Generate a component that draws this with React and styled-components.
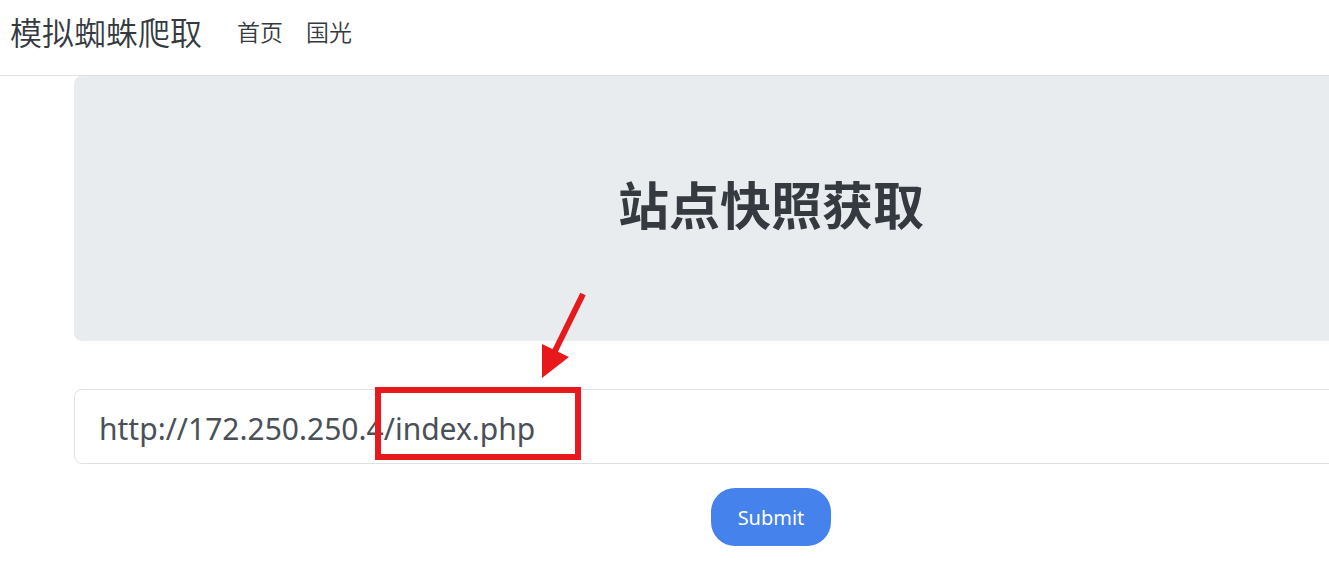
import React from "react";
import styled, { createGlobalStyle } from "styled-components";

const GlobalStyle = createGlobalStyle`
  *, *::before, *::after { box-sizing: border-box; }
  body {
    margin: 0;
    background: #fff;
    color: #343a40;
    font-family: "Noto Sans", "Noto Sans CJK SC", sans-serif;
  }
`;

const Page = styled.div`
  overflow: hidden;
  padding-bottom: 24px;
`;

const Header = styled.header`
  display: flex;
  align-items: flex-start;
  height: 76px;
  padding: 8px 10px;
  border-bottom: 1px solid #dee2e6;
`;

const Brand = styled.a`
  margin-right: 35px;
  color: #343a40;
  font-family: "Noto Sans CJK SC", sans-serif;
  font-size: 32px;
  font-weight: 350;
  line-height: 46px;
  text-decoration: none;
`;

const Nav = styled.nav`
  display: flex;
  gap: 23px;
`;

const NavLink = styled.a`
  color: #343a40;
  font-family: "Noto Sans CJK SC", sans-serif;
  font-size: 23px;
  font-weight: 350;
  line-height: 46px;
  text-decoration: none;
`;

const Main = styled.main`
  margin-left: 74px;
  margin-right: -139px;
`;

const Hero = styled.section`
  display: flex;
  justify-content: center;
  padding: 91px 0 102px;
  border-radius: 8px;
  background: #e9ecef;
`;

const Title = styled.h1`
  margin: 0;
  font-family: "Noto Sans CJK SC", sans-serif;
  font-size: 51px;
  font-weight: 700;
  line-height: 72px;
`;

const Form = styled.form`
  display: flex;
  flex-direction: column;
  align-items: center;
  gap: 24px;
  margin-top: 48px;
`;

const Field = styled.div`
  position: relative;
  width: 100%;
`;

const UrlInput = styled.input`
  display: block;
  width: 100%;
  height: 75px;
  padding: 4px 24px 0;
  border: 1px solid #dee2e6;
  border-radius: 8px;
  color: #495057;
  background: #fff;
  font-family: "Noto Sans", sans-serif;
  font-size: 30px;
  outline: none;
`;

const Submit = styled.button`
  width: 120px;
  height: 58px;
  border: 0;
  border-radius: 24px;
  color: #fff;
  background: #4582ec;
  font-family: "Noto Sans", sans-serif;
  font-size: 20px;
`;

const Annotation = styled.svg`
  position: absolute;
  left: 300px;
  bottom: 3px;
  pointer-events: none;
`;

export default function App() {
  return (
    <Page>
      <GlobalStyle />
      <Header>
        <Brand href="#">模拟蜘蛛爬取</Brand>
        <Nav>
          <NavLink href="#">首页</NavLink>
          <NavLink href="#">国光</NavLink>
        </Nav>
      </Header>
      <Main>
        <Hero>
          <Title>站点快照获取</Title>
        </Hero>
        <Form onSubmit={(e) => e.preventDefault()}>
          <Field>
            <UrlInput aria-label="URL" type="text" defaultValue="http://172.250.250.4/index.php" />
            <Annotation width="220" height="170" viewBox="0 0 220 170" aria-hidden="true">
              <rect x="4" y="99" width="200" height="67" fill="none" stroke="#e8191c" strokeWidth="6" />
              <path d="M209 3 L179 64" stroke="#e8191c" strokeWidth="6" />
              <path d="M168 53 L195 66 L168 87 Z" fill="#e8191c" />
            </Annotation>
          </Field>
          <Submit type="submit">Submit</Submit>
        </Form>
      </Main>
    </Page>
  );
}
